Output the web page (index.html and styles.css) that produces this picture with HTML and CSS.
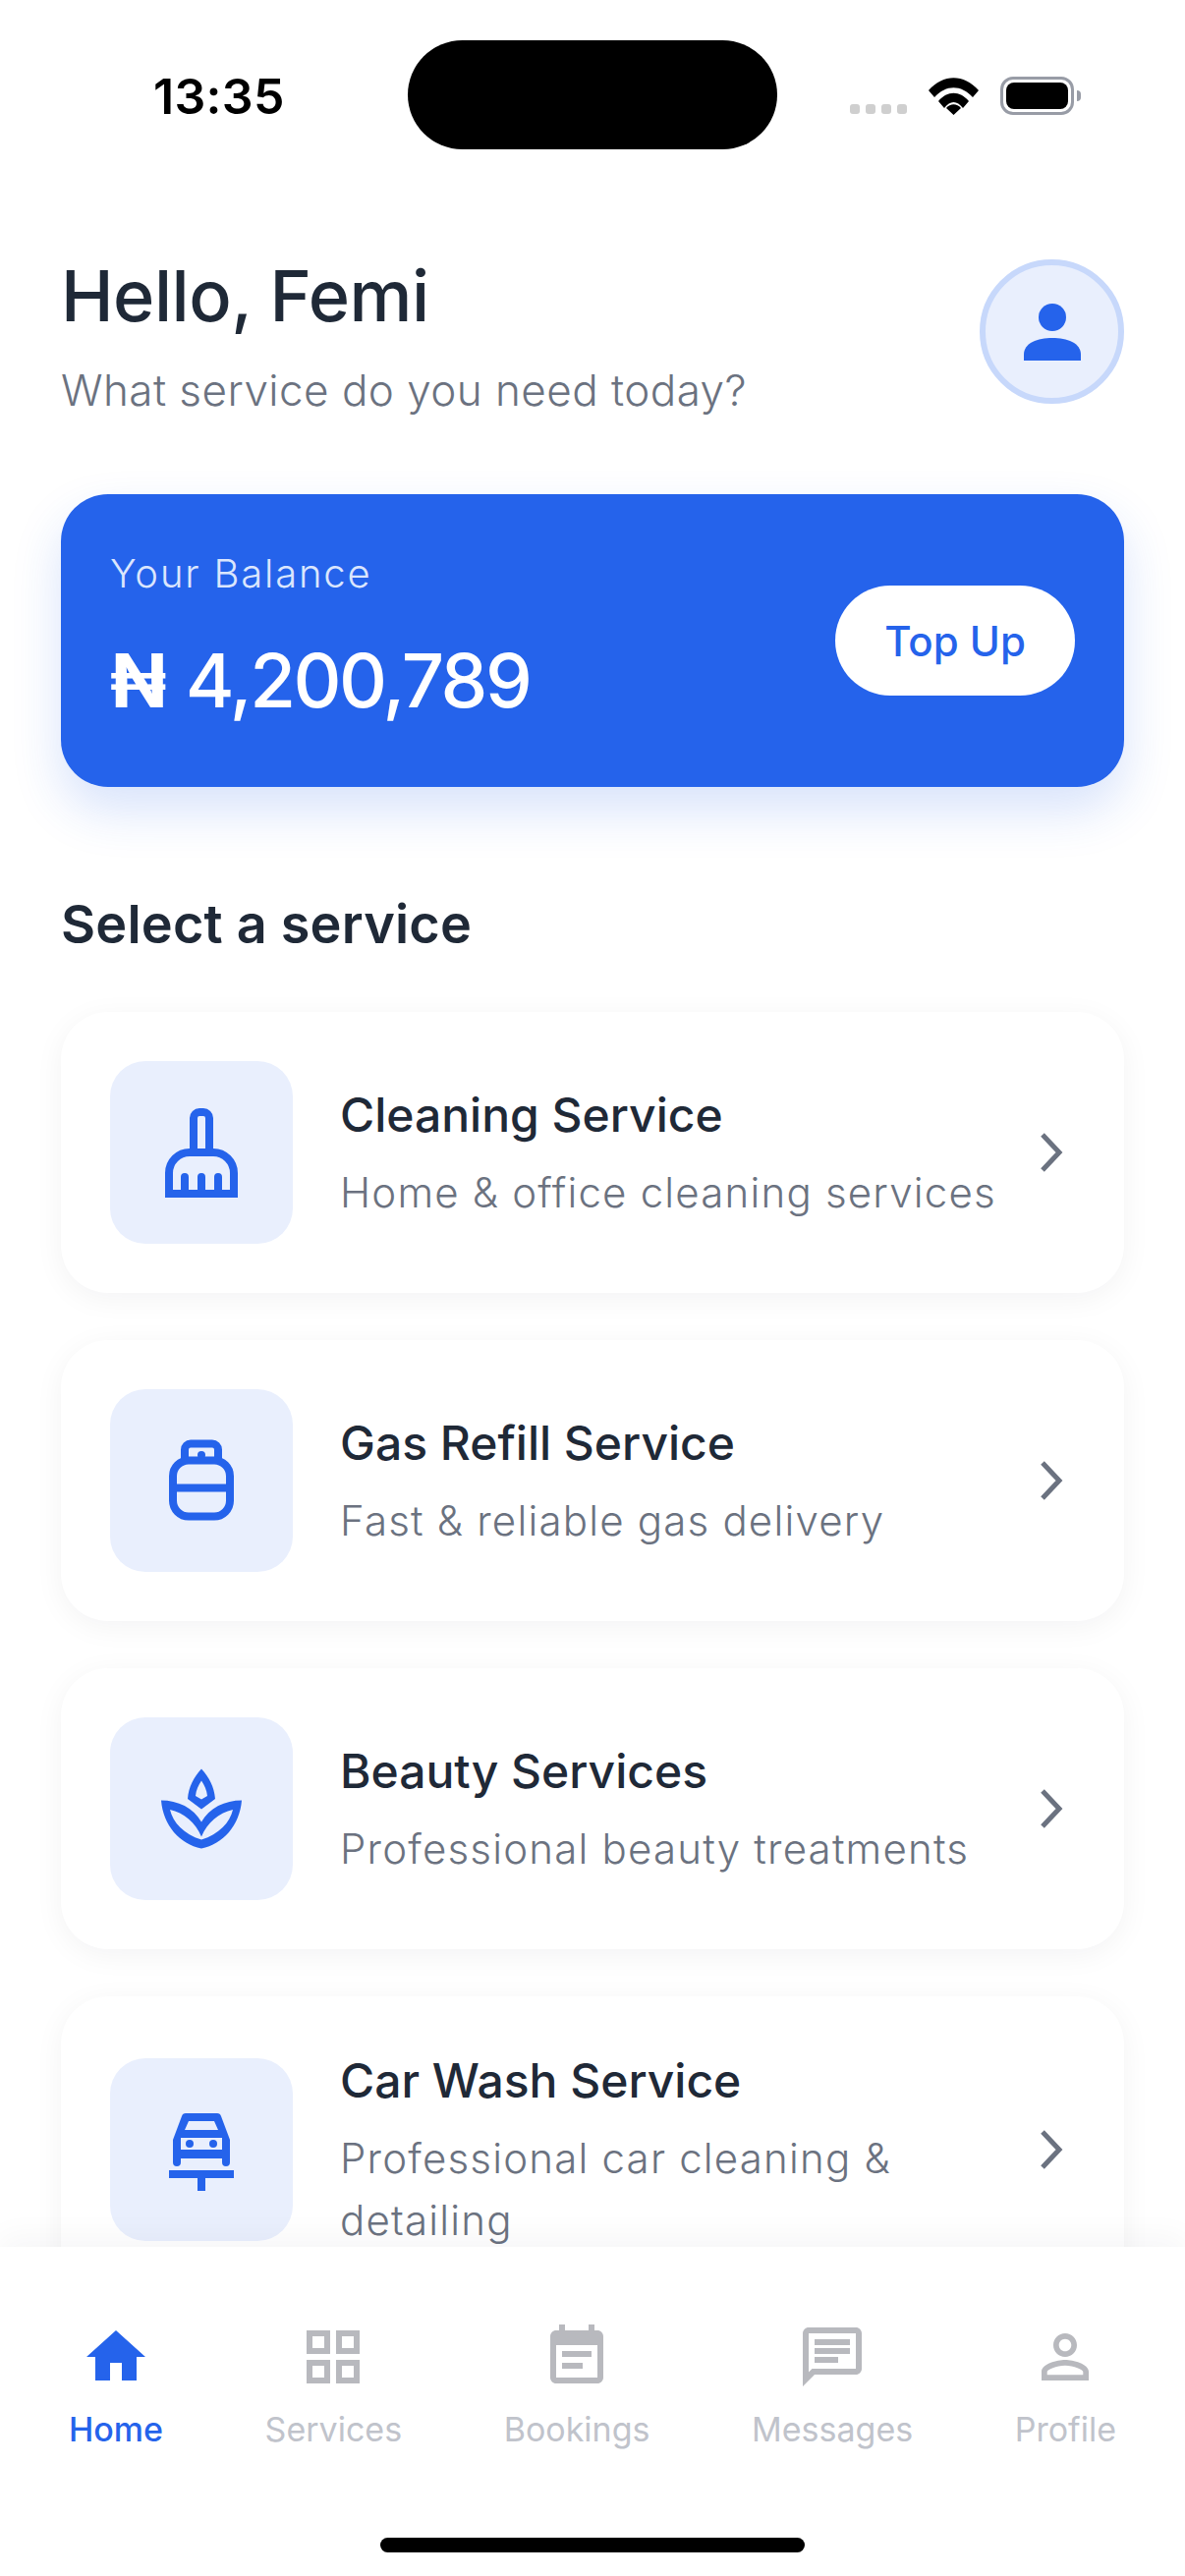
FILE: index.html
```html
<!DOCTYPE html>
<html lang="en">
<head>
    <meta charset="UTF-8">
    <meta name="viewport" content="width=device-width, initial-scale=1.0">
    <title>Home</title>
    <link rel="stylesheet" href="styles.css">
</head>
<body>
    <div class="phone">
        <div class="status-bar">
            <span class="time">13:35</span>
            <div class="island"></div>
            <div class="status-icons">
                <div class="signal"><i></i><i></i><i></i><i></i></div>
                <svg class="wifi" viewBox="0 0 51 38" width="51" height="38"><path d="M0 13 C15 -4 36 -4 51 13 L45 20 C33 7 18 7 6 20 Z M10 24 C19 13 32 13 41 24 L35 31 C29 23 22 23 16 31 Z M25.500 38 L18 31 C22 26 29 26 33 31 Z" fill="#000"/></svg>
                <div class="battery"><div class="battery-fill"></div></div>
            </div>
        </div>

        <main class="content">
            <header class="greeting">
                <div>
                    <h1>Hello, Femi</h1>
                    <p>What service do you need today?</p>
                </div>
                <div class="avatar">
                    <svg viewBox="0 0 58 58" width="58" height="58"><circle cx="29" cy="14" r="14" fill="#2563eb"/><path d="M0 58 V52 C0 40 14 35 29 35 C44 35 58 40 58 52 V58 Z" fill="#2563eb"/></svg>
                </div>
            </header>

            <section class="balance">
                <div class="balance-info">
                    <div class="balance-label">Your Balance</div>
                    <div class="balance-amount"><span class="naira">₦</span> 4,200,789</div>
                </div>
                <button class="topup">Top Up</button>
            </section>

            <h2 class="section-title">Select a service</h2>

            <div class="services">
                <div class="card">
                    <div class="tile">
                        <svg viewBox="0 0 96 96" width="96" height="96" fill="none" stroke="#2563eb" stroke-width="8"><path d="M40 48 V13 A6 6 0 0 1 46 7 H50 A6 6 0 0 1 56 13 V48"/><path d="M15 90 V69 A21 21 0 0 1 36 48 H60 A21 21 0 0 1 81 69 V90 Z"/><path stroke-linecap="round" d="M31 90 V73 M48 90 V73 M65 90 V73"/></svg>
                    </div>
                    <div class="card-text">
                        <h3>Cleaning Service</h3>
                        <p>Home &amp; office cleaning services</p>
                    </div>
                    <svg class="chevron" viewBox="0 0 26 42" width="26" height="42"><path d="M3 3 L20 21 L3 39" fill="none" stroke="#6b7280" stroke-width="5"/></svg>
                </div>

                <div class="card">
                    <div class="tile">
                        <svg viewBox="0 0 96 96" width="96" height="96" fill="none" stroke="#2563eb" stroke-width="8"><path d="M31 27 V16.500 A6 6 0 0 1 37 10.500 H59 A6 6 0 0 1 65 16.500 V27"/><rect x="19" y="27.500" width="58" height="57" rx="16"/><path d="M19 55.500 H77"/><circle cx="48" cy="22" r="4" fill="#2563eb" stroke="none"/></svg>
                    </div>
                    <div class="card-text">
                        <h3>Gas Refill Service</h3>
                        <p>Fast &amp; reliable gas delivery</p>
                    </div>
                    <svg class="chevron" viewBox="0 0 26 42" width="26" height="42"><path d="M3 3 L20 21 L3 39" fill="none" stroke="#6b7280" stroke-width="5"/></svg>
                </div>

                <div class="card">
                    <div class="tile">
                        <svg viewBox="0 0 96 96" width="96" height="96" fill="#2563eb" fill-rule="evenodd"><path d="M48 7.500 C56 16 61 26 62 38 L48 48.500 L34 38 C35 26 40 16 48 7.500 Z M48 19.500 C45 24 42.500 29 42 35 L48 38.500 L54 35 C53.500 29 51 24 48 19.500 Z"/><path d="M7 39.500 C24 39.500 40 47 48 61.500 C56 47 72 39.500 89 39.500 C87 65 70 84 48 88.500 C26 84 9 65 7 39.500 Z M16 49 C30 52 42 62 48 76.500 C54 62 66 52 80 49 C77 62 66 74 48 79.500 C30 74 19 62 16 49 Z"/></svg>
                    </div>
                    <div class="card-text">
                        <h3>Beauty Services</h3>
                        <p>Professional beauty treatments</p>
                    </div>
                    <svg class="chevron" viewBox="0 0 26 42" width="26" height="42"><path d="M3 3 L20 21 L3 39" fill="none" stroke="#6b7280" stroke-width="5"/></svg>
                </div>

                <div class="card">
                    <div class="tile">
                        <svg viewBox="0 0 96 96" width="96" height="96" fill="#2563eb"><path fill-rule="evenodd" d="M32 11 H64 C66 11 67.500 12 68 14 L77 38 V61 A4 4 0 0 1 69 61 V57 H27 V61 A4 4 0 0 1 19 61 V38 L28 14 C28.500 12 30 11 32 11 Z M35 19 L31 28 H65 L61 19 Z M27 36 V48 H69 V36 Z"/><circle cx="36" cy="42" r="4"/><circle cx="60" cy="42" r="4"/><path d="M15 69 H81 V77 H52 V90 H44 V77 H15 Z"/></svg>
                    </div>
                    <div class="card-text">
                        <h3>Car Wash Service</h3>
                        <p>Professional car cleaning &amp; detailing</p>
                    </div>
                    <svg class="chevron" viewBox="0 0 26 42" width="26" height="42"><path d="M3 3 L20 21 L3 39" fill="none" stroke="#6b7280" stroke-width="5"/></svg>
                </div>
            </div>
        </main>

        <nav class="tabbar">
            <a class="tab active">
                <svg viewBox="0 0 24 24" width="72" height="72"><path d="M10 20v-6h4v6h5v-8h3L12 3 2 12h3v8z"/></svg>
                <span>Home</span>
            </a>
            <a class="tab">
                <svg viewBox="0 0 24 24" width="72" height="72"><path d="M3 3v8h8V3H3zm6 6H5V5h4v4zm-6 4v8h8v-8H3zm6 6H5v-4h4v4zm4-16v8h8V3h-8zm6 6h-4V5h4v4zm-6 4v8h8v-8h-8zm6 6h-4v-4h4v4z"/></svg>
                <span>Services</span>
            </a>
            <a class="tab">
                <svg viewBox="0 0 24 24" width="72" height="72"><path d="M17 10H7v2h10v-2zm2-7h-1V1h-2v2H8V1H6v2H5c-1.110 0-1.990.9-1.990 2L3 19c0 1.100.89 2 2 2h14c1.100 0 2-.9 2-2V5c0-1.100-.9-2-2-2zm0 16H5V8h14v11zm-5-5H7v2h7v-2z"/></svg>
                <span>Bookings</span>
            </a>
            <a class="tab">
                <svg viewBox="0 0 24 24" width="72" height="72"><path d="M20 2H4c-1.100 0-1.990.9-1.990 2L2 22l4-4h14c1.100 0 2-.9 2-2V4c0-1.100-.9-2-2-2zm0 14H5.170L4 17.170V4h16v12zM6 12h8v2H6zm0-3h12v2H6zm0-3h12v2H6z"/></svg>
                <span>Messages</span>
            </a>
            <a class="tab">
                <svg viewBox="0 0 24 24" width="72" height="72"><path d="M12 5.900c1.160 0 2.100.94 2.100 2.100s-.94 2.100-2.100 2.100S9.900 9.160 9.900 8s.94-2.100 2.100-2.100m0 9c2.970 0 6.100 1.460 6.100 2.100v1.100H5.900V17c0-.64 3.130-2.100 6.100-2.100M12 4C9.790 4 8 5.790 8 8s1.790 4 4 4 4-1.790 4-4-1.790-4-4-4zm0 9c-2.670 0-8 1.340-8 4v3h16v-3c0-2.660-5.330-4-8-4z"/></svg>
                <span>Profile</span>
            </a>
            <div class="home-indicator"></div>
        </nav>
    </div>
</body>
</html>
```

FILE: styles.css
```css
* {
    box-sizing: border-box;
}
body {
    margin: 0;
    background-color: #fff;
    font-family: Inter, "Noto Sans", sans-serif;
}
.phone {
    position: relative;
    width: 1206px;
    height: 2622px;
    overflow: hidden;
    background-color: #fff;
}

/* status bar */
.status-bar {
    position: relative;
    height: 152px;
}
.time {
    position: absolute;
    left: 156px;
    top: 68px;
    font-weight: 600;
    font-size: 50px;
    line-height: 60px;
    letter-spacing: 0.3px;
    color: #000;
}
.island {
    position: absolute;
    left: 415px;
    top: 41px;
    width: 376px;
    height: 111px;
    border-radius: 56px;
    background-color: #000;
}
.status-icons {
    position: absolute;
    left: 865px;
    top: 78px;
    display: flex;
    align-items: flex-end;
}
.signal {
    display: flex;
    gap: 6px;
    margin-right: 22px;
    margin-bottom: 1px;
}
.signal i {
    width: 10px;
    height: 10px;
    border-radius: 3px;
    background-color: #cfcfcf;
}
.wifi {
    margin-right: 22px;
}
.battery {
    position: relative;
    width: 75px;
    height: 39px;
    padding: 3px;
    border: 3px solid #989ca6;
    border-radius: 13px;
}
.battery::after {
    content: "";
    position: absolute;
    right: -10px;
    top: 11px;
    width: 4px;
    height: 11px;
    border-radius: 0 4px 4px 0;
    background-color: #989ca6;
}
.battery-fill {
    height: 100%;
    border-radius: 8px;
    background-color: #000;
}

/* main content */
.content {
    padding: 112px 62px 0;
}
.greeting {
    display: flex;
    justify-content: space-between;
    align-items: flex-start;
}
.greeting h1 {
    margin: 0 0 32px;
    font-size: 72px;
    line-height: 74px;
    font-weight: 500;
    letter-spacing: -0.5px;
    color: #1f2937;
}
.greeting p {
    margin: 0;
    font-size: 44px;
    line-height: 54px;
    font-weight: 300;
    letter-spacing: 0.45px;
    color: #6b7280;
}
.avatar {
    display: flex;
    align-items: center;
    justify-content: center;
    width: 147px;
    height: 147px;
    border: 6px solid #c7d8fb;
    border-radius: 50%;
    background-color: #e9effd;
}
.balance {
    display: flex;
    justify-content: space-between;
    align-items: center;
    height: 298px;
    margin-top: 79px;
    padding: 0 50px;
    border-radius: 48px;
    background-color: #2563eb;
    box-shadow: 0 24px 50px rgba(37, 99, 235, 0.18);
}
.balance-info {
    padding-bottom: 14px;
}
.balance-label {
    font-size: 40px;
    line-height: 54px;
    font-weight: 300;
    letter-spacing: 1.8px;
    color: #dbe6fd;
}
.balance-amount {
    margin-top: 39px;
    font-size: 76px;
    line-height: 84px;
    font-weight: 500;
    letter-spacing: -2.5px;
    color: #fff;
}
.naira {
    margin-right: 4px;
    font-weight: 700;
}
.topup {
    width: 244px;
    height: 112px;
    border: none;
    border-radius: 56px;
    background-color: #fff;
    color: #2563eb;
    font-family: inherit;
    font-size: 42px;
    font-weight: 500;
}
.section-title {
    margin: 107px 0 0;
    font-size: 54px;
    line-height: 66px;
    font-weight: 600;
    letter-spacing: 0.2px;
    color: #1f2937;
}
.services {
    display: flex;
    flex-direction: column;
    gap: 48px;
    margin-top: 56px;
}
.card {
    display: flex;
    align-items: center;
    padding: 50px;
    border-radius: 48px;
    background-color: #fff;
    box-shadow: 0 6px 30px rgba(17, 24, 39, 0.05);
}
.tile {
    display: flex;
    align-items: center;
    justify-content: center;
    flex: none;
    width: 186px;
    height: 186px;
    margin-right: 48px;
    border-radius: 36px;
    background-color: #e9effd;
}
.card-text {
    flex: 1;
    padding: 6px 0 3px;
}
.card-text h3 {
    margin: 0 0 17px;
    font-size: 48px;
    line-height: 60px;
    font-weight: 500;
    color: #1f2937;
}
.card-text p {
    margin: 0;
    font-size: 42px;
    line-height: 63px;
    font-weight: 300;
    letter-spacing: 1.2px;
    color: #6b7280;
}
.chevron {
    flex: none;
    margin-left: 20px;
    margin-right: 10px;
}

/* bottom nav */
.tabbar {
    position: absolute;
    left: 0;
    right: 0;
    bottom: 0;
    height: 335px;
    display: flex;
    justify-content: space-between;
    align-items: flex-start;
    padding: 76px 70px 0;
    background-color: #fff;
    box-shadow: 0 -10px 30px rgba(17, 24, 39, 0.04);
}
.tab {
    display: flex;
    flex-direction: column;
    align-items: center;
    font-size: 34px;
    line-height: 44px;
    color: #c0c3cb;
    fill: #b8b9be;
}
.tab span {
    margin-top: 16px;
}
.tab.active {
    color: #2563eb;
    fill: #2563eb;
    font-weight: 500;
}
.home-indicator {
    position: absolute;
    left: 387px;
    bottom: 24px;
    width: 432px;
    height: 15px;
    border-radius: 8px;
    background-color: #000;
}
```
